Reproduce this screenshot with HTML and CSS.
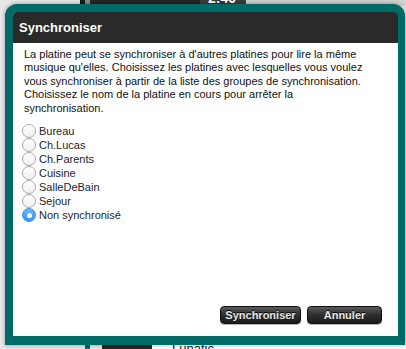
FILE: index.html
```html
<!DOCTYPE html>
<html lang="fr">
<head>
<meta charset="utf-8">
<link rel="stylesheet" href="styles.css">
</head>
<body>
<div class="backdrop">
  <div class="strip top">
    <div class="seg light w80"></div>
    <div class="seg black w5"></div>
    <div class="seg gray w5"></div>
    <div class="seg dark w110"></div>
    <div class="seg time w45"><span>2:40</span></div>
    <div class="seg pale grow"></div>
  </div>
  <div class="middle"></div>
  <div class="strip bottom">
    <div class="seg light w85"></div>
    <div class="seg teal w5"></div>
    <div class="seg light w12"></div>
    <div class="seg dark w50"></div>
    <div class="seg white grow"><span class="lunatic">Lunatic</span></div>
  </div>
</div>

<div class="dialog">
  <div class="titlebar">Synchroniser</div>
  <div class="content">
    <p class="intro">La platine peut se synchroniser à d'autres platines pour lire la même<br>musique qu'elles. Choisissez les platines avec lesquelles vous voulez<br>vous synchroniser à partir de la liste des groupes de synchronisation.<br>Choisissez le nom de la platine en cours pour arrêter la<br>synchronisation.</p>
    <ul class="radios">
      <li><span class="radio"></span>Bureau</li>
      <li><span class="radio"></span>Ch.Lucas</li>
      <li><span class="radio"></span>Ch.Parents</li>
      <li><span class="radio"></span>Cuisine</li>
      <li><span class="radio"></span>SalleDeBain</li>
      <li><span class="radio"></span>Sejour</li>
      <li><span class="radio checked"></span>Non synchronisé</li>
    </ul>
    <div class="actions">
      <button class="btn sync">Synchroniser</button>
      <button class="btn cancel">Annuler</button>
    </div>
  </div>
</div>
</body>
</html>
```

FILE: styles.css
```css
html, body {
  margin: 0;
  padding: 0;
  width: 406px;
  height: 349px;
  overflow: hidden;
  background: #e6e6e6;
  font-family: "Liberation Sans", Arial, sans-serif;
}

.backdrop {
  display: flex;
  flex-direction: column;
  width: 406px;
  height: 349px;
}

.strip {
  display: flex;
  height: 6px;
}

.middle {
  flex: 1;
}

.seg { height: 100%; }
.w5 { width: 5px; }
.w12 { width: 12px; }
.w45 { width: 45px; }
.w50 { width: 50px; }
.w80 { width: 80px; }
.w85 { width: 85px; }
.w110 { width: 110px; }
.grow { flex: 1; }
.light { background: #e6e6e6; }
.black { background: #0c1c1c; }
.gray { background: #8a8a8a; }
.dark { background: #262626; }
.time {
  background: #3a3a3a;
  color: #fff;
  font-size: 14px;
  font-weight: bold;
  line-height: 0;
  overflow: hidden;
}
.time span { display: block; padding-left: 8px; margin-top: -2px; }
.pale { background: #cfcfcf; border-left: 1px solid #444; }
.teal { background: #006b66; }
.white { background: #fff; overflow: hidden; }
.lunatic {
  display: block;
  padding-left: 20px;
  font-size: 13px;
  color: #1a1a3a;
  line-height: 12px;
}
.bottom { height: 6px; }

.dialog {
  position: absolute;
  left: 5px;
  top: 4px;
  width: 400px;
  height: 341px;
  box-sizing: border-box;
  border-style: solid;
  border-color: #006b66;
  border-width: 8px 7px 9px 8px;
  border-radius: 12px 12px 0 0;
  background: #fff;
  box-shadow: 0 0 4px rgba(0, 0, 0, 0.35);
  display: flex;
  flex-direction: column;
}

.titlebar {
  height: 31px;
  background: #2a2a2a;
  border-radius: 4px 4px 0 0;
  color: #fff;
  font-weight: bold;
  font-size: 13px;
  line-height: 31px;
  padding-left: 6px;
}

.content {
  flex: 1;
  display: flex;
  flex-direction: column;
  padding: 5px 16px 12px 11px;
}

.intro {
  margin: 0;
  font-size: 11px;
  line-height: 13.4px;
  color: #111;
}

.radios {
  list-style: none;
  margin: 9px 0 0 0;
  padding: 0;
}

.radios li {
  display: flex;
  align-items: center;
  height: 14px;
  font-size: 11px;
  color: #1e1e2e;
  margin-left: -2px;
}

.radio {
  box-sizing: border-box;
  width: 14px;
  height: 14px;
  border-radius: 50%;
  border: 1px solid #a9a9a9;
  background: linear-gradient(#ffffff, #f0f0f0);
  margin-right: 3px;
  display: flex;
  align-items: center;
  justify-content: center;
}

.radio.checked {
  border-color: #3f8ee6;
  background: linear-gradient(#6cb3fa, #3a93f3);
}

.radio.checked::after {
  content: "";
  width: 5px;
  height: 5px;
  border-radius: 50%;
  background: #fff;
}

.actions {
  margin-top: auto;
  display: flex;
  justify-content: flex-end;
  gap: 6px;
}

.btn {
  height: 18px;
  padding: 0;
  border: 1px solid #111;
  border-radius: 4px;
  background: linear-gradient(#5a5a5a, #2e2e2e 50%, #1a1a1a);
  color: #e6e6e6;
  font-family: "Liberation Sans", Arial, sans-serif;
  font-weight: bold;
  font-size: 11px;
  text-shadow: 0 -1px 0 #000;
  box-shadow: 0 1px 1px rgba(0, 0, 0, 0.3);
}

.sync { width: 81px; }
.cancel { width: 75px; }
```
